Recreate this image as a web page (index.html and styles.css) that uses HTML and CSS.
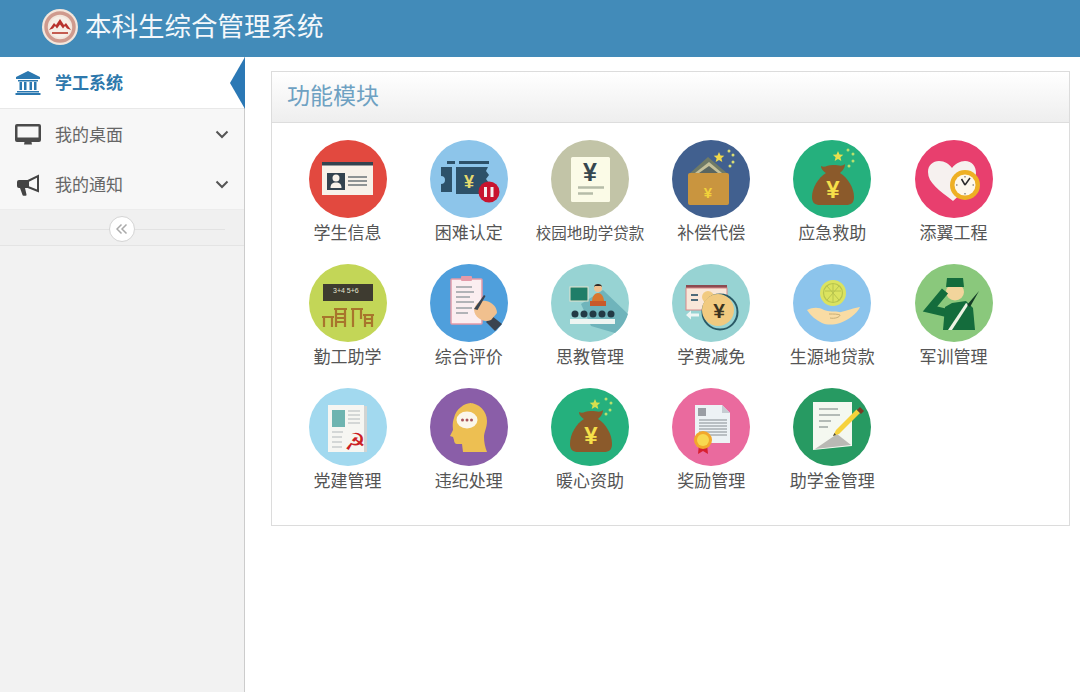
FILE: index.html
```html
<!DOCTYPE html>
<html lang="zh-CN">
<head>
    <meta charset="UTF-8">
    <title>本科生综合管理系统</title>
    <link rel="stylesheet" href="styles.css">
</head>
<body>
    <div class="topbar">
        <svg class="logo" viewBox="0 0 36 36">
            <circle cx="18" cy="18" r="18" fill="#f3e6dc"/>
            <circle cx="18" cy="18" r="14" fill="none" stroke="#cf9a8e" stroke-width="3.500"/>
            <circle cx="18" cy="18" r="10.500" fill="#f7efe8"/>
            <path d="M7 21l5-7 2 2 4-6 4 6 2-2 5 7-4-1.500-2-2.500-2 2.500-3-4-3 4-2-2.500-2 2.500z" fill="#b8322e"/>
            <path d="M10 24h16" stroke="#c45c50" stroke-width="2"/>
        </svg>
        <div class="sys-title">本科生综合管理系统</div>
    </div>

    <div class="wrap">
        <div class="sidebar">
            <div class="nav-item active">
                <svg class="nav-icon" viewBox="0 0 26 24">
                    <path d="M13 0L25 6v2H1V6z" fill="#2b78b0"/>
                    <path d="M3 9h20v1.500H3zM4.500 11h2.500v8H4.500zM9 11h2.500v8H9zM14.500 11h2.500v8h-2.500zM19 11h2.500v8H19zM2 20h22v1.500H2zM0.500 22h25v2H0.500z" fill="#2b78b0"/>
                </svg>
                <span class="nav-label">学工系统</span>
            </div>
            <div class="nav-item">
                <svg class="nav-icon" viewBox="0 0 26 22">
                    <path d="M2 0h22a2 2 0 0 1 2 2v14a2 2 0 0 1-2 2H2a2 2 0 0 1-2-2V2a2 2 0 0 1 2-2zm.500 2.500v11h21v-11z" fill="#4a4a4a"/>
                    <path d="M9.500 18h7l.5 2.500h-8z" fill="#4a4a4a"/>
                </svg>
                <span class="nav-label">我的桌面</span>
                <svg class="chevron" viewBox="0 0 14 9"><path d="M1.500 1.500L7 7l5.500-5.500" fill="none" stroke="#555" stroke-width="2"/></svg>
            </div>
            <div class="nav-item">
                <svg class="nav-icon" viewBox="0 0 26 22">
                    <path d="M13 7l10-5v15l-10-4z" fill="#f7f7f7" stroke="#444" stroke-width="2"/>
                    <path d="M4 6h9v8H4a2 2 0 0 1-2-2V8a2 2 0 0 1 2-2z" fill="#444"/>
                    <path d="M5 14h5l1.500 6.500a1 1 0 0 1-1 1.200H8.500a1 1 0 0 1-1-.8z" fill="#444"/>
                </svg>
                <span class="nav-label">我的通知</span>
                <svg class="chevron" viewBox="0 0 14 9"><path d="M1.500 1.500L7 7l5.500-5.500" fill="none" stroke="#555" stroke-width="2"/></svg>
            </div>
            <div class="collapse-bar">
                <span class="collapse-btn">
                    <svg viewBox="0 0 12 12"><path d="M5.500 1.500L1 6l4.500 4.500M10.500 1.500L6 6l4.500 4.500" fill="none" stroke="#aaa" stroke-width="1.500"/></svg>
                </span>
            </div>
        </div>

        <div class="main">
            <div class="panel">
                <div class="panel-head">功能模块</div>
                <div class="panel-body">

                    <div class="cell">
                        <svg class="icon" viewBox="0 0 78 78">
                            <circle cx="39" cy="39" r="39" fill="#e2493f"/>
                            <rect x="13" y="22" width="51" height="33" fill="#f7f1e9"/>
                            <rect x="13" y="22" width="51" height="3.500" fill="#33434f"/>
                            <rect x="18" y="33" width="18" height="17" fill="#33434f"/>
                            <circle cx="27" cy="38" r="3.500" fill="#f7f1e9"/>
                            <path d="M21.500 48c0-4 2-5.500 5.500-5.500s5.500 1.500 5.500 5.500z" fill="#f7f1e9"/>
                            <path d="M39 37h19M39 41h19M39 45h19" stroke="#6c7478" stroke-width="1.600"/>
                        </svg>
                        <span class="cell-name">学生信息</span>
                    </div>

                    <div class="cell">
                        <svg class="icon" viewBox="0 0 78 78">
                            <circle cx="39" cy="39" r="39" fill="#8dc5ea"/>
                            <path d="M11 27h11v25H11v-8a4 4 0 0 0 0-8z" fill="#2d5169"/>
                            <path d="M17 21h8v3h-8zM29 21h30v3H29z" fill="#2d5169"/>
                            <path d="M26 27h32l-2 4 3 4-3 4 3 4-3 4 2 7H26z" fill="#2d5169"/>
                            <text class="yen" x="39" y="48" font-size="18" fill="#e6da6e">¥</text>
                            <circle cx="59" cy="52" r="10.500" fill="#c8142f"/>
                            <path d="M55.500 47v10M62 47v10" stroke="#f4f0f0" stroke-width="3"/>
                        </svg>
                        <span class="cell-name">困难认定</span>
                    </div>

                    <div class="cell">
                        <svg class="icon" viewBox="0 0 78 78">
                            <circle cx="39" cy="39" r="39" fill="#c2c4a7"/>
                            <rect x="20" y="17" width="39" height="45" rx="1.500" fill="#fbfbe7"/>
                            <text class="yen" x="39" y="41" font-size="25" fill="#36474f">¥</text>
                            <path d="M27 47.500h26" stroke="#b6bca8" stroke-width="2.500"/>
                            <path d="M27 53.500h15" stroke="#b6bca8" stroke-width="2.500"/>
                        </svg>
                        <span class="cell-name small">校园地助学贷款</span>
                    </div>

                    <div class="cell">
                        <svg class="icon" viewBox="0 0 78 78">
                            <circle cx="39" cy="39" r="39" fill="#41608f"/>
                            <path d="M17 34L36 17l20 17z" fill="#6f7a66"/>
                            <path d="M23 33l14-11 13 11z" fill="#c4c09a"/>
                            <path d="M27 33l10-7 9 7z" fill="#5a6660"/>
                            <rect x="16" y="33" width="41" height="32" rx="2" fill="#c9953f"/>
                            <text class="yen" x="36" y="58" font-size="15" fill="#f2d23a">¥</text>
                            <path class="star" d="M47 12l1.500 3.500 3.800.3-2.900 2.500.9 3.700L47 20l-3.300 2 .9-3.700-2.900-2.500 3.800-.3z" fill="#f0d84a"/>
                            <circle cx="57" cy="11" r="1.500" fill="#d9dd74"/><circle cx="61" cy="15" r="1.500" fill="#d9dd74"/><circle cx="61" cy="22" r="1.500" fill="#d9dd74"/><circle cx="58" cy="26" r="1.500" fill="#d9dd74"/>
                        </svg>
                        <span class="cell-name">补偿代偿</span>
                    </div>

                    <div class="cell">
                        <svg class="icon" viewBox="0 0 78 78">
                            <circle cx="39" cy="39" r="39" fill="#25b07d"/>
                            <path d="M28 26c4 2 6-1 12-1s9 2 12-1c0 5-4 8-6 10H34c-2-2-6-4-6-8z" fill="#8b5a2b"/>
                            <path d="M33 33h14c8 5 14 15 14 24 0 6-3 8-8 8H27c-5 0-8-2-8-8 0-9 6-19 14-24z" fill="#8b5a2b"/>
                            <text class="yen" x="40" y="58" font-size="24" fill="#f6e04a">¥</text>
                            <path class="star" d="M45 11l1.500 3.500 3.800.3-2.900 2.500.9 3.700L45 19l-3.300 2 .9-3.700-2.900-2.500 3.800-.3z" fill="#eadf4e"/>
                            <circle cx="55" cy="10" r="1.500" fill="#b8e06e"/><circle cx="60" cy="14" r="1.500" fill="#b8e06e"/><circle cx="60" cy="21" r="1.500" fill="#b8e06e"/><circle cx="56" cy="26" r="1.500" fill="#b8e06e"/>
                        </svg>
                        <span class="cell-name">应急救助</span>
                    </div>

                    <div class="cell">
                        <svg class="icon" viewBox="0 0 78 78">
                            <circle cx="39" cy="39" r="39" fill="#e83f6e"/>
                            <path d="M38 61C24 50 13 43 13 32c0-7 5-11 11-11 6 0 10 3 13 7 3-4 8-7 13-7 7 0 11 5 11 12 0 10-12 18-23 28z" fill="#f6f1ef"/>
                            <circle cx="50" cy="45" r="15" fill="#eeb024"/>
                            <circle cx="50" cy="45" r="10.500" fill="#fdf8ec"/>
                            <path d="M50 45l-3.500-6M50 45l5-7" stroke="#2b2b2b" stroke-width="1.500" fill="none"/>
                            <path d="M50 36v1.500M50 53v1.500M41 45h1.500M57.500 45H59" stroke="#555" stroke-width="1"/>
                        </svg>
                        <span class="cell-name">添翼工程</span>
                    </div>

                    <div class="cell">
                        <svg class="icon" viewBox="0 0 78 78">
                            <circle cx="39" cy="39" r="39" fill="#c3d657"/>
                            <rect x="14" y="20" width="50" height="17" fill="#3e3b30"/>
                            <text class="chalk" x="24" y="29" font-size="7" fill="#e6e6d2">3+4 5+6</text>
                            <path d="M13 53h12M15 53v10M23 53v10M25 45h13M27 45v18M36 45v18M27 50h9M27 54h9M27 58h9" stroke="#a8752c" stroke-width="2.200" fill="none"/>
                            <path d="M42 45h12M44 45v18M52 45v10M54 51h11M56 51v12M63 51v12M55 55h9M55 59h9" stroke="#a8752c" stroke-width="2.200" fill="none"/>
                        </svg>
                        <span class="cell-name">勤工助学</span>
                    </div>

                    <div class="cell">
                        <svg class="icon" viewBox="0 0 78 78">
                            <circle cx="39" cy="39" r="39" fill="#4f9fdc"/>
                            <rect x="21" y="15" width="31" height="45" rx="1" fill="#fbeef0" stroke="#e49aa8" stroke-width="1.500"/>
                            <rect x="31" y="12" width="11" height="5" rx="1" fill="#e49aa8"/>
                            <path d="M26 23h16M26 28h18M26 33h14M26 38h18M26 44h16M26 49h12" stroke="#9aa0a4" stroke-width="1.300"/>
                            <path d="M56 58l6-6 10 8-7 7z" fill="#3b4450"/>
                            <path d="M44 46c1-6 6-10 12-9 6 1 11 6 11 12l-6 7c-8 3-16-2-17-10z" fill="#f1c08e"/>
                            <path d="M44 45l10-14 1.500 1-8 14z" fill="#3b4450"/>
                        </svg>
                        <span class="cell-name">综合评价</span>
                    </div>

                    <div class="cell">
                        <svg class="icon" viewBox="0 0 78 78">
                            <circle cx="39" cy="39" r="39" fill="#97d3d3"/>
                            <path d="M52 26l25 24c-3 9-7 14-13 19L40 62 30 40z" fill="#6fb4bb"/>
                            <rect x="19" y="23" width="18" height="14" fill="#1f7e68" stroke="#e7e3cf"/>
                            <circle cx="47" cy="24" r="4" fill="#f0c090"/>
                            <path d="M43 23c0-4 8-4 8 0l-1-1h-6z" fill="#2b2b2b"/>
                            <path d="M41 38c0-6 3-9 6-9s6 3 6 9z" fill="#d9772e"/>
                            <rect x="39" y="37" width="16" height="5" fill="#c85a2a"/>
                            <circle cx="24" cy="50" r="3.500" fill="#233a45"/><circle cx="33" cy="50" r="3.500" fill="#233a45"/><circle cx="42" cy="50" r="3.500" fill="#233a45"/><circle cx="51" cy="50" r="3.500" fill="#233a45"/><circle cx="60" cy="50" r="3.500" fill="#233a45"/>
                            <rect x="19" y="55" width="45" height="5" fill="#eef5f2"/>
                        </svg>
                        <span class="cell-name">思教管理</span>
                    </div>

                    <div class="cell">
                        <svg class="icon" viewBox="0 0 78 78">
                            <circle cx="39" cy="39" r="39" fill="#97d3d3"/>
                            <rect x="14" y="21" width="41" height="7" fill="#8c4a50"/>
                            <rect x="14" y="24" width="41" height="22" fill="#f9e7d9" stroke="#d88a8a"/>
                            <path d="M19 31h7M19 36h7" stroke="#4d6a7a" stroke-width="1.800"/>
                            <circle cx="36" cy="33" r="6" fill="#f1ca80"/>
                            <circle cx="48" cy="48" r="17.500" fill="none" stroke="#2a5a66" stroke-width="2"/>
                            <circle cx="46" cy="46" r="16" fill="#f1ca80"/>
                            <text class="yen" x="47" y="54" font-size="21" fill="#3b3320">¥</text>
                            <path d="M14 51l5-4.500v3h8v3h-8v3z" fill="#eef6f5"/>
                        </svg>
                        <span class="cell-name">学费减免</span>
                    </div>

                    <div class="cell">
                        <svg class="icon" viewBox="0 0 78 78">
                            <circle cx="39" cy="39" r="39" fill="#8cc4ec"/>
                            <circle cx="40" cy="29" r="13" fill="#dbe35f"/>
                            <circle cx="40" cy="29" r="9.500" fill="none" stroke="#b7c44e" stroke-width="1.200"/>
                            <path d="M32 27h16M40 20v18M34 22l12 14M46 22L34 36" stroke="#b7c44e" stroke-width="1"/>
                            <path d="M14 46c6-3 12-3 17 0 4 2 12 1 15 2 2 1 10-3 21-5-3 7-12 13-20 16-7 2-13 2-18 0-6-3-11-7-15-13z" fill="#f9dca4"/>
                            <path d="M36 50c5 0 9 0 11 1 0 2-5 4-10 3" fill="none" stroke="#c9b078" stroke-width="1"/>
                        </svg>
                        <span class="cell-name">生源地贷款</span>
                    </div>

                    <div class="cell">
                        <svg class="icon" viewBox="0 0 78 78">
                            <circle cx="39" cy="39" r="39" fill="#8ac87c"/>
                            <ellipse cx="40" cy="28" rx="9" ry="8.500" fill="#f2d59c"/>
                            <path d="M31 23l1-9h16l1 9z" fill="#146c3c"/>
                            <path d="M30 27L15 45l17 4" fill="none" stroke="#146c3c" stroke-width="8" stroke-linejoin="miter"/>
                            <path d="M30 43l7-4 14-2 7 7 2 22H28z" fill="#146c3c"/>
                            <path d="M33 66l18-27 2.500 1.500L37 66z" fill="#eef3e4"/>
                            <path d="M52 41l12-14-9 16z" fill="#143c26"/>
                        </svg>
                        <span class="cell-name">军训管理</span>
                    </div>

                    <div class="cell">
                        <svg class="icon" viewBox="0 0 78 78">
                            <circle cx="39" cy="39" r="39" fill="#a2d9ef"/>
                            <rect x="22" y="18" width="36" height="46" fill="#d2d4d2"/>
                            <rect x="19" y="17" width="36" height="47" fill="#f6f6f2"/>
                            <rect x="23" y="22" width="13" height="17" fill="#6eb4b0"/>
                            <path d="M39 23h12M39 27h12M39 31h12M39 35h12M23 44h11M23 49h10M23 54h10M23 59h10" stroke="#c9cdcd" stroke-width="1.300"/>
                            <text class="emblem" x="46" y="62" font-size="24" fill="#cc1f24">☭</text>
                        </svg>
                        <span class="cell-name">党建管理</span>
                    </div>

                    <div class="cell">
                        <svg class="icon" viewBox="0 0 78 78">
                            <circle cx="39" cy="39" r="39" fill="#8a5ea8"/>
                            <path d="M39 15c10 0 18 8 18 18 0 7-3 11-3 16 0 5 1 10 3 15H33l-1-8h-5c-2 0-3-2-3-4l-1-3-3-1 3-6c0-3-1-6 1-12 2-9 10-15 18-15z" fill="#edbf52"/>
                            <ellipse cx="37" cy="32" rx="10.500" ry="8.500" fill="#fbf7ea"/>
                            <circle cx="32.500" cy="32" r="1.500" fill="#a8545a"/><circle cx="37" cy="32" r="1.500" fill="#a8545a"/><circle cx="41.500" cy="32" r="1.500" fill="#a8545a"/>
                        </svg>
                        <span class="cell-name">违纪处理</span>
                    </div>

                    <div class="cell">
                        <svg class="icon" viewBox="0 0 78 78">
                            <circle cx="39" cy="39" r="39" fill="#25b07d"/>
                            <path d="M28 24c4 2 6-1 12-1s9 2 12-1c0 5-4 8-6 10H34c-2-2-6-4-6-8z" fill="#8b5a2b"/>
                            <path d="M33 31h14c8 5 14 15 14 25 0 6-3 8-8 8H27c-5 0-8-2-8-8 0-10 6-20 14-25z" fill="#8b5a2b"/>
                            <text class="yen" x="40" y="56" font-size="24" fill="#f6e04a">¥</text>
                            <path class="star" d="M44 11l1.500 3.500 3.800.3-2.900 2.500.9 3.700L44 19l-3.300 2 .9-3.700-2.900-2.500 3.800-.3z" fill="#d5df4e"/>
                            <circle cx="55" cy="11" r="1.500" fill="#b8e06e"/><circle cx="60" cy="15" r="1.500" fill="#b8e06e"/><circle cx="59" cy="22" r="1.500" fill="#b8e06e"/><circle cx="55" cy="26" r="1.500" fill="#b8e06e"/>
                        </svg>
                        <span class="cell-name">暖心资助</span>
                    </div>

                    <div class="cell">
                        <svg class="icon" viewBox="0 0 78 78">
                            <circle cx="39" cy="39" r="39" fill="#ea6a9e"/>
                            <path d="M23 17h27l8 8v30H23z" fill="#edf2f5"/>
                            <path d="M50 17v8h8z" fill="#c6ccd2"/>
                            <rect x="26" y="20" width="8" height="8" fill="#9a9ea4"/>
                            <path d="M27 32h28M27 35h28M27 38h28M27 41h28M27 44h28M27 47h28" stroke="#a8aeb2" stroke-width="1.300"/>
                            <path d="M27 56l-1 10 5-3 5 3-1-10z" fill="#d82030"/>
                            <circle cx="31" cy="52" r="9" fill="#f2a72c"/>
                            <circle cx="31" cy="52" r="6" fill="#f8d850"/>
                        </svg>
                        <span class="cell-name">奖励管理</span>
                    </div>

                    <div class="cell">
                        <svg class="icon" viewBox="0 0 78 78">
                            <circle cx="39" cy="39" r="39" fill="#279a62"/>
                            <path d="M20 14h39v44l-39 4z" fill="#f4f8f0"/>
                            <path d="M22 61l22-15 14 11z" fill="#b9b9b4"/>
                            <path d="M26 21h19M26 27h21M26 33h12M26 39h9" stroke="#9da6a2" stroke-width="1.500"/>
                            <path d="M43 42l-3 6 6-2 21-21-3.500-3.500z" fill="#f6d23c"/>
                            <path d="M64 22l3-3 4 4-3 3z" fill="#7a3a24"/>
                            <path d="M41.500 45l-1.500 3 3-1z" fill="#444"/>
                        </svg>
                        <span class="cell-name">助学金管理</span>
                    </div>

                </div>
            </div>
        </div>
    </div>
</body>
</html>
```

FILE: styles.css
```css
body {
    margin: 0;
    height: 692px;
    overflow: hidden;
    font-family: "Noto Sans CJK SC", "Noto Sans", sans-serif;
    background-color: #fff;
    color: #555;
}

.topbar {
    height: 57px;
    display: flex;
    align-items: center;
    padding: 0 0 4px 42px;
    box-sizing: border-box;
    background-color: #428bb9;
}

.logo {
    width: 36px;
    height: 36px;
    margin-right: 7px;
}

.sys-title {
    font-size: 26.500px;
    line-height: 36px;
    padding-bottom: 4px;
    color: #f4f8fb;
}

.wrap {
    display: flex;
    height: 635px;
}

.sidebar {
    width: 245px;
    flex-shrink: 0;
    box-sizing: border-box;
    border-right: 1px solid #ccc;
    background-color: #f2f2f2;
}

.nav-item {
    height: 50px;
    display: flex;
    align-items: center;
    padding: 0 15px 2px;
    box-sizing: border-box;
    background-color: #f7f7f7;
    position: relative;
}

.nav-item.active {
    height: 52px;
    padding-bottom: 3px;
    background-color: #fff;
    border-bottom: 1px solid #e8e8e8;
}

.nav-item.active::after {
    content: "";
    position: absolute;
    right: -1px;
    top: 0;
    bottom: -1px;
    width: 15px;
    background-color: #2b78b5;
    clip-path: polygon(100% 0, 0 50%, 100% 100%);
}

.nav-icon {
    width: 26px;
    height: 24px;
    margin: 3px 14px 0 0;
    flex-shrink: 0;
}

.nav-label {
    font-size: 17px;
    color: #666;
}

.active .nav-label {
    font-weight: bold;
    color: #2e78ac;
}

.chevron {
    width: 14px;
    height: 9px;
    margin: 2px 0 0 auto;
}

.collapse-bar {
    height: 37px;
    display: flex;
    align-items: center;
    justify-content: center;
    padding-top: 3px;
    box-sizing: border-box;
    border-top: 1px solid #ececec;
    border-bottom: 1px solid #e4e4e4;
    background-color: #f0f0f0;
    background-image: linear-gradient(#e2e2e2, #e2e2e2);
    background-size: 205px 1px;
    background-position: center 19px;
    background-repeat: no-repeat;
}

.collapse-btn {
    width: 26px;
    height: 26px;
    display: flex;
    align-items: center;
    justify-content: center;
    background-color: #fff;
    border: 1px solid #d4d4d4;
    border-radius: 50%;
    box-sizing: border-box;
}

.collapse-btn svg {
    width: 12px;
    height: 12px;
}

.main {
    flex: 1;
    padding: 14px 10px 0 26px;
}

.panel {
    border: 1px solid #dcdcdc;
}

.panel-head {
    height: 50px;
    line-height: 45px;
    padding-left: 15px;
    font-size: 23px;
    color: #6ea1c2;
    border-bottom: 1px solid #ddd;
    background-image: linear-gradient(#fff, #eee);
}

.panel-body {
    display: flex;
    flex-wrap: wrap;
    padding: 17px 0 13px 15px;
}

.cell {
    width: 121.200px;
    height: 124px;
    display: flex;
    flex-direction: column;
    align-items: center;
}

.icon {
    width: 78px;
    height: 78px;
    flex-shrink: 0;
}

.cell-name {
    font-size: 17px;
    line-height: 28px;
    color: #555;
    white-space: nowrap;
}

.cell-name.small {
    font-size: 15.500px;
}

.yen {
    text-anchor: middle;
    font-family: "Liberation Sans", sans-serif;
    font-weight: bold;
}

.chalk {
    font-family: "Liberation Sans", sans-serif;
}

.emblem {
    text-anchor: middle;
    font-family: "DejaVu Sans", sans-serif;
    font-weight: bold;
}
```
